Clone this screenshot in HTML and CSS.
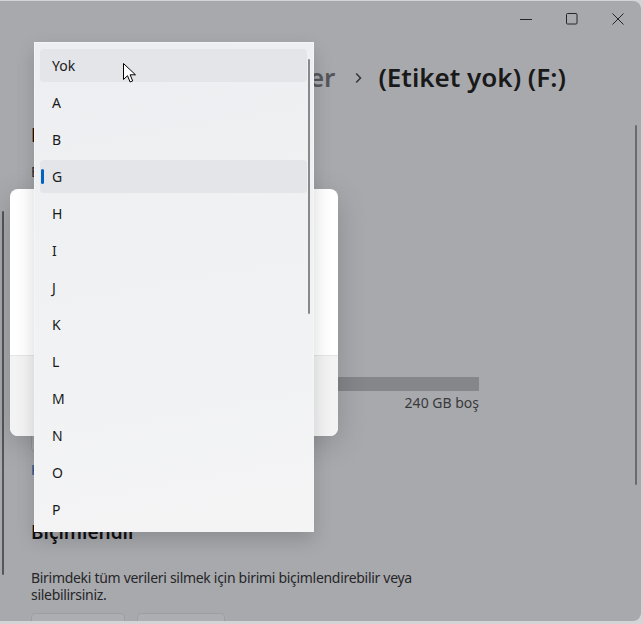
FILE: index.html
```html
<!DOCTYPE html>
<html lang="tr">
<head>
    <meta charset="UTF-8">
    <meta name="viewport" content="width=device-width, initial-scale=1.0">
    <title>Ayarlar</title>
    <link rel="stylesheet" href="styles.css">
</head>
<body>
    <div class="window">
        <div class="titlebar">
            <div class="caption-btn">
                <svg width="12" height="12" viewBox="0 0 12 12"><path d="M0 6.5h12" stroke="#262628" stroke-width="1"/></svg>
            </div>
            <div class="caption-btn">
                <svg width="12" height="12" viewBox="0 0 12 12"><rect x="0.5" y="0.5" width="10.5" height="10.5" rx="1" fill="none" stroke="#262628" stroke-width="1"/></svg>
            </div>
            <div class="caption-btn">
                <svg width="12" height="12" viewBox="0 0 12 12"><path d="M0.5 0.5l11 11M11.5 0.5l-11 11" stroke="#262628" stroke-width="1"/></svg>
            </div>
        </div>

        <div class="page">
            <div class="breadcrumb">
                <span class="crumb-parent">Diskler ve birimler</span>
                <svg class="crumb-sep" width="7" height="12" viewBox="0 0 7 12"><path d="M1.2 1.5l4.3 4.5-4.3 4.5" fill="none" stroke="#333436" stroke-width="1.5"/></svg>
                <span class="crumb-current">(Etiket yok) (F:)</span>
            </div>

            <h2 class="section-title">Birim verileri</h2>
            <p class="meta">Bu birim için sürücü harfi ve etiket</p>

            <div class="props">
                <div>Sürücü harfi: F</div>
                <div>Dosya sistemi: NTFS</div>
            </div>

            <div class="size-block">
                <div class="size-title">Boyut</div>
                <div class="usage-bar"><div class="usage-fill" style="width: 2%"></div></div>
                <div class="usage-label">240 GB boş</div>
                <div class="usage-btn">Boyutu değiştir</div>
                <a class="link">Kullanımı görüntüle</a>
            </div>

            <h2 class="section-title format-title">Biçimlendir</h2>
            <p class="desc">Birimdeki tüm verileri silmek için birimi biçimlendirebilir veya<br>silebilirsiniz.</p>
            <div class="buttons">
                <div class="btn btn-format">Biçimlendir</div>
                <div class="btn btn-delete">Sil</div>
            </div>
        </div>

        <div class="nav-scroll"></div>
        <div class="page-scroll"></div>

        <div class="dialog">
            <div class="dialog-body">
                <div class="dialog-title">Sürücü harfini değiştir</div>
                <div class="dialog-select">G</div>
            </div>
            <div class="dialog-footer">
                <div class="btn btn-accent">Tamam</div>
                <div class="btn">İptal</div>
            </div>
        </div>

        <div class="dropdown">
            <ul class="options">
                <li class="option hover">Yok</li>
                <li class="option">A</li>
                <li class="option">B</li>
                <li class="option selected">G</li>
                <li class="option">H</li>
                <li class="option">I</li>
                <li class="option">J</li>
                <li class="option">K</li>
                <li class="option">L</li>
                <li class="option">M</li>
                <li class="option">N</li>
                <li class="option">O</li>
                <li class="option">P</li>
                <li class="option">Q</li>
                <li class="option">R</li>
                <li class="option">S</li>
            </ul>
            <div class="dropdown-scroll"></div>
        </div>

        <svg class="cursor" width="13" height="21" viewBox="0 0 13 21">
            <path d="M0.5 0.5v16l4-3.8 2.6 6.3 2.6-1.1-2.6-6.1h5.4z" fill="#fff" stroke="#000" stroke-width="1" stroke-linejoin="round"/>
        </svg>
    </div>
</body>
</html>
```

FILE: styles.css
```css
* {
    box-sizing: border-box;
}
body {
    margin: 0;
    width: 643px;
    height: 624px;
    overflow: hidden;
    background-color: #d3d4d6;
    font-family: "Noto Sans", "Liberation Sans", sans-serif;
    color: #1b1b1c;
}
.window {
    position: relative;
    width: 641px;
    height: 620px;
    margin-top: 1px;
    background-color: #a8a9ad;
    border-radius: 0 8px 8px 0;
    overflow: hidden;
}
.titlebar {
    display: flex;
    justify-content: flex-end;
    height: 36px;
}
.caption-btn {
    width: 46px;
    height: 36px;
    display: flex;
    align-items: center;
    justify-content: center;
}

/* page behind the dialog */
.page {
    width: 479px;
    padding-left: 31px;
}
.breadcrumb {
    display: flex;
    align-items: center;
    height: 40px;
    margin-top: 20px;
    font-size: 26px;
    font-weight: 600;
    white-space: nowrap;
}
.breadcrumb > * {
    flex: none;
}
.crumb-parent {
    margin-left: 72px;
    color: #56575b;
}
.crumb-sep {
    margin: 2px 16px 0 20px;
}
.crumb-current {
    color: #19191a;
}
.section-title {
    margin: 24px 0 0;
    font-size: 19px;
    line-height: 28px;
    font-weight: 600;
    color: #111112;
}
.meta {
    margin: 13px 0 0;
    font-size: 14px;
    line-height: 20px;
    color: #252527;
}
.props {
    margin-top: 20px;
    font-size: 14px;
    line-height: 22px;
}
.size-block {
    margin-top: 46px;
}
.size-title {
    font-size: 14px;
    line-height: 20px;
    margin-bottom: 65px;
}
.usage-bar {
    height: 14px;
    background-color: #858689;
}
.usage-fill {
    height: 100%;
    background-color: #2d5f94;
}
.usage-label {
    margin-top: 2px;
    text-align: right;
    font-size: 14px;
    line-height: 20px;
    color: #38393b;
}
.usage-btn {
    width: 130px;
    height: 32px;
    margin-top: 7px;
    padding-left: 12px;
    border: 1px solid #9a9b9f;
    border-radius: 4px;
    background-color: #b0b1b4;
    font-size: 14px;
    line-height: 30px;
}
.link {
    display: block;
    margin-top: 8px;
    font-size: 14px;
    line-height: 20px;
    color: #1d4c82;
}
.format-title {
    margin-top: 38px;
}
.desc {
    margin: 23px 0 0;
    font-size: 14px;
    line-height: 17px;
    letter-spacing: -0.3px;
    color: #262628;
}
.buttons {
    display: flex;
    gap: 12px;
    margin-top: 10px;
}
.btn {
    height: 32px;
    padding: 0 12px;
    border: 1px solid #9d9ea2;
    border-radius: 4px;
    background-color: #adaeb1;
    font-size: 14px;
    line-height: 30px;
    text-align: center;
}
.btn-format {
    width: 94px;
}
.btn-delete {
    width: 88px;
}

.nav-scroll {
    position: absolute;
    left: 2px;
    top: 210px;
    width: 2px;
    height: 364px;
    border-radius: 1px;
    background-color: #55565a;
}
.page-scroll {
    position: absolute;
    left: 635px;
    top: 124px;
    width: 2px;
    height: 360px;
    border-radius: 1px;
    background-color: #6a6b6f;
}

/* dialog */
.dialog {
    position: absolute;
    left: 10px;
    top: 188px;
    width: 328px;
    height: 247px;
    display: flex;
    flex-direction: column;
    border-radius: 8px;
    background-color: #ffffff;
    box-shadow: 0 8px 30px rgba(0, 0, 0, 0.18);
    overflow: hidden;
}
.dialog-body {
    height: 166px;
    padding: 24px;
}
.dialog-title {
    font-size: 20px;
    font-weight: 600;
}
.dialog-select {
    margin-top: 20px;
    height: 32px;
    width: 120px;
    border: 1px solid #e0e0e0;
    border-radius: 4px;
    padding-left: 11px;
    font-size: 14px;
    line-height: 30px;
}
.dialog-footer {
    flex: 1;
    display: flex;
    gap: 8px;
    padding: 24px;
    border-top: 1px solid #e5e5e5;
    background-color: #f3f3f3;
}
.dialog-footer .btn {
    flex: 1;
    background-color: #fbfbfb;
    border-color: #e3e3e3;
}
.dialog-footer .btn-accent {
    background-color: #005fb8;
    color: #ffffff;
}

/* drive letter list */
.dropdown {
    position: absolute;
    left: 34px;
    top: 41px;
    width: 280px;
    height: 490px;
    border: 1px solid #f4f5f6;
    background: linear-gradient(170deg, #eceef1 0%, #f0f1f3 40%, #f4f4f5 100%);
    box-shadow: 0 8px 18px rgba(0, 0, 0, 0.16);
    overflow: hidden;
}
.options {
    list-style: none;
    display: flex;
    flex-direction: column;
    gap: 4px;
    margin: 0;
    padding: 6px 6px 0 5px;
}
.option {
    position: relative;
    flex: none;
    height: 33px;
    padding-left: 12px;
    border-radius: 4px;
    font-size: 14px;
    line-height: 33px;
    color: #1a1a1a;
}
.option.hover,
.option.selected {
    background-color: #e4e5e8;
}
.option.selected::before {
    content: "";
    position: absolute;
    left: 1px;
    top: 9px;
    width: 3px;
    height: 15px;
    border-radius: 2px;
    background-color: #0063c2;
}
.dropdown-scroll {
    position: absolute;
    right: 3px;
    top: 16px;
    width: 2px;
    height: 255px;
    border-radius: 1px;
    background-color: #89898c;
}
.cursor {
    position: absolute;
    left: 123px;
    top: 62px;
}
```
